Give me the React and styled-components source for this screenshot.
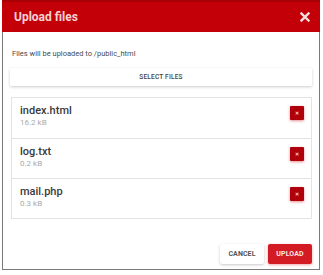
import React from "react";
import styled, { createGlobalStyle } from "styled-components";

const Global = createGlobalStyle`
  html, body { margin: 0; padding: 0; background: #fff; }
  body { font-family: Roboto, "Liberation Sans", Arial, sans-serif; }
`;

const Dialog = styled.div`
  margin-left: 2px;
  width: 318px;
  height: 270px;
  box-sizing: border-box;
  border: 1px solid #7a7a7a;
  border-top: none;
  display: flex;
  flex-direction: column;
  background: #fff;
`;

const Header = styled.div`
  height: 32px;
  margin: 0 -1px;
  background: #c30008;
  border-top: 2px solid #a80006;
  box-sizing: border-box;
  display: flex;
  align-items: center;
  justify-content: space-between;
  padding: 0 10px 0 12px;
`;

const Title = styled.div`
  color: #f4d2d2;
  font-weight: 700;
  font-size: 12px;
`;

const CloseIcon = styled.svg`
  width: 10px;
  height: 10px;
  display: block;
`;

const Body = styled.div`
  flex: 1;
  display: flex;
  flex-direction: column;
  padding: 17px 7px 5px 7px;
`;

const Note = styled.div`
  font-size: 7.5px;
  line-height: 10px;
  color: #4a4a4a;
  margin-bottom: 9px;
  padding-left: 2px;
`;

const SelectButton = styled.div`
  height: 18px;
  display: flex;
  align-items: center;
  justify-content: center;
  font-size: 6.5px;
  font-weight: 500;
  color: #444;
  letter-spacing: 0.2px;
  box-shadow: 0 1px 3px rgba(0, 0, 0, 0.2);
  border-radius: 1px;
  margin-bottom: 11px;
`;

const List = styled.div`
  border: 1px solid #e3e3e3;
  margin-left: 1px;
`;

const Row = styled.div`
  height: 40px;
  box-sizing: border-box;
  display: flex;
  align-items: flex-start;
  justify-content: space-between;
  padding: 6px 7px 0 8px;
  border-top: ${(p) => (p.$first ? "none" : "1px solid #e3e3e3")};
`;

const Info = styled.div`
  display: flex;
  flex-direction: column;
`;

const Name = styled.div`
  font-size: 11px;
  font-weight: 500;
  color: #3a3a3a;
  line-height: 13px;
`;

const Size = styled.div`
  font-size: 8px;
  color: #aaa;
  line-height: 11px;
`;

const Delete = styled.div`
  width: 14px;
  height: 14px;
  border-radius: 1px;
  background: #b0000c;
  box-shadow: 0 1px 3px rgba(200, 0, 0, 0.45);
  display: flex;
  align-items: center;
  justify-content: center;
  color: #fbd6d6;
  font-size: 5px;
  font-weight: 700;
  margin-top: 2px;
`;

const Footer = styled.div`
  margin-top: auto;
  display: flex;
  justify-content: flex-end;
  gap: 4px;
`;

const Button = styled.div`
  width: 44px;
  height: 20px;
  display: flex;
  align-items: center;
  justify-content: center;
  font-size: 7px;
  font-weight: 700;
  letter-spacing: 0.1px;
  border-radius: 2px;
  background: ${(p) => (p.$primary ? "#d31b24" : "#fff")};
  color: ${(p) => (p.$primary ? "#fde5e5" : "#555")};
  box-shadow: ${(p) =>
    p.$primary ? "0 1px 3px rgba(200,0,0,0.35)" : "0 1px 3px rgba(0,0,0,0.22)"};
`;

const files = [
  { name: "index.html", size: "16.2 kB" },
  { name: "log.txt", size: "0.2 kB" },
  { name: "mail.php", size: "0.3 kB" },
];

export default function App() {
  return (
    <>
      <Global />
      <Dialog>
        <Header>
          <Title>Upload files</Title>
          <CloseIcon viewBox="0 0 10 10">
            <path d="M1.5 1.5 L8.5 8.5 M8.5 1.5 L1.5 8.5" stroke="#f6dede" strokeWidth="2.4" strokeLinecap="square" />
          </CloseIcon>
        </Header>
        <Body>
          <Note>Files will be uploaded to /public_html</Note>
          <SelectButton>SELECT FILES</SelectButton>
          <List>
            {files.map((f, i) => (
              <Row key={f.name} $first={i === 0}>
                <Info>
                  <Name>{f.name}</Name>
                  <Size>{f.size}</Size>
                </Info>
                <Delete>✕</Delete>
              </Row>
            ))}
          </List>
          <Footer>
            <Button>CANCEL</Button>
            <Button $primary>UPLOAD</Button>
          </Footer>
        </Body>
      </Dialog>
    </>
  );
}
